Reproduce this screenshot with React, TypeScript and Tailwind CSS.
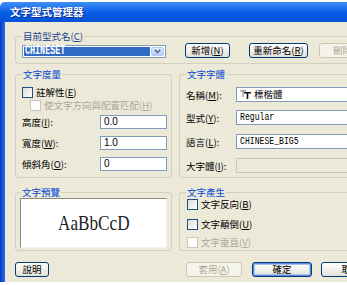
import React from "react";

const U = ({ c }: { c: string }) => <span className="underline underline-offset-[1px]">{c}</span>;

function Btn({
  children,
  className = "",
  disabled = false,
  def = false,
}: {
  children: React.ReactNode;
  className?: string;
  disabled?: boolean;
  def?: boolean;
}) {
  const look = disabled
    ? "border-[#c9c7ba] bg-[#f5f4ea] text-[#aca899]"
    : "border-[#003c74] bg-gradient-to-b from-white to-[#e3e1d6] text-black";
  const ring = def ? "shadow-[inset_0_0_0_1px_#5d8be0,inset_0_0_0_2px_#a7c3f2]" : "";
  return (
    <div
      className={`flex h-[15px] shrink-0 items-center justify-center rounded-[3px] border text-[9.5px] leading-none whitespace-nowrap ${look} ${ring} ${className}`}
    >
      {children}
    </div>
  );
}

function Check({
  children,
  disabled = false,
  className = "",
}: {
  children: React.ReactNode;
  disabled?: boolean;
  className?: string;
}) {
  return (
    <div className={`flex h-[12px] items-center whitespace-nowrap ${className}`}>
      <span
        className={`h-[11px] w-[11px] shrink-0 border ${
          disabled ? "border-[#c9c7ba] bg-white" : "border-[#1c5180] bg-gradient-to-br from-[#dcdcd7] to-white"
        }`}
      />
      <span className={`ml-[3px] text-[9.5px] leading-[12px] ${disabled ? "text-[#aca899]" : "text-black"}`}>
        {children}
      </span>
    </div>
  );
}

function NumRow({ label, value, className = "" }: { label: React.ReactNode; value: string; className?: string }) {
  return (
    <div className={`flex items-center ${className}`}>
      <span className="w-[78px] text-[9.5px] leading-[12px]">{label}</span>
      <div className="flex h-[14px] w-[67px] items-center border border-[#7f9db9] bg-white pl-[3px] font-['Liberation_Sans',sans-serif] text-[10px] leading-none">
        {value}
      </div>
    </div>
  );
}

function Mono({ children }: { children: React.ReactNode }) {
  return (
    <span className="inline-block origin-left scale-x-[0.74] font-['Liberation_Mono',monospace] text-[11px] leading-none text-black">
      {children}
    </span>
  );
}

function FontRow({
  label,
  children,
  className = "",
  disabled = false,
}: {
  label: React.ReactNode;
  children?: React.ReactNode;
  className?: string;
  disabled?: boolean;
}) {
  return (
    <div className={`flex items-center ${className}`}>
      <span className="w-[50px] text-[9.5px] leading-[12px]">{label}</span>
      <div
        className={`flex h-[15px] flex-1 items-center border pl-[3px] ${
          disabled ? "border-[#c9c7ba] bg-[#ece9d8]" : "border-[#7f9db9] bg-white"
        }`}
      >
        {children}
      </div>
    </div>
  );
}

const legend = "px-[1px] text-[9.5px] leading-[11px] text-[#0046d5]";
const group = "rounded-[3px] border border-[#d0d0bf]";

export default function App() {
  return (
    <div className="h-[285px] w-[347px] overflow-hidden bg-white pt-[2px] font-['Noto_Sans_CJK_TC','Noto_Sans',sans-serif] text-black">
      <div className="w-[420px]">
        {/* title bar */}
        <div className="flex h-[20px] items-center rounded-tl-[5px] bg-gradient-to-b from-[#3f8ff6] via-[#0b5ee9] to-[#0652d8] pl-[10px] text-[10.5px] font-bold text-white [text-shadow:1px_1px_#0a2a8f]">
          文字型式管理器
        </div>

        <div className="flex h-[260px]">
          <div className="w-[5px] bg-gradient-to-r from-[#0a37bd] via-[#1656dc] to-[#2d6ae6]" />
          <div className="flex-1 bg-[#ece9d8] pl-[10px]">
            {/* current style */}
            <fieldset className={`mt-[9px] h-[33px] w-[400px] pl-[6px] ${group}`}>
              <legend className="px-[1px] text-[9.5px] leading-[11px] text-[#1d3f94]">
                目前型式名(<U c="C" />)
              </legend>
              <div className="flex items-start">
                <div className="mt-[3px] flex h-[13px] w-[144px] shrink-0 items-center border border-[#7f9db9] bg-white p-[1px]">
                  <div className="flex h-full w-[126px] items-center bg-[#316ac5] pl-[1px]">
                    <span className="inline-block origin-left scale-x-[0.7] font-['Liberation_Mono',monospace] text-[12px] leading-[9px] font-bold text-white">
                      CHINESET
                    </span>
                  </div>
                  <div className="ml-auto flex h-full w-[13px] items-center justify-center rounded-[2px] border border-[#b3c8f5] bg-gradient-to-b from-[#e1eafe] to-[#b6cbf6]">
                    <svg width="7" height="5" viewBox="0 0 7 5">
                      <path d="M0.8 0.8 L3.5 3.6 L6.2 0.8" fill="none" stroke="#4d6185" strokeWidth="1.4" />
                    </svg>
                  </div>
                </div>
                <Btn className="ml-[19px] mt-[1px] w-[45px]">
                  新增(<U c="N" />)
                </Btn>
                <Btn className="ml-[19px] mt-[1px] w-[59px]">
                  重新命名(<U c="R" />)
                </Btn>
                <Btn disabled className="ml-[11px] mt-[1px] w-[60px]">
                  刪除(<U c="D" />)
                </Btn>
              </div>
            </fieldset>

            {/* metrics + font */}
            <div className="mt-[5px] flex gap-[7px]">
              <fieldset className={`h-[109px] w-[157px] shrink-0 pl-[6px] ${group}`}>
                <legend className={legend}>文字度量</legend>
                <Check className="mt-[6px]">
                  註解性(<U c="E" />)
                </Check>
                <Check disabled className="ml-[8px] mt-[1px]">
                  使文字方向與配置匹配(<U c="H" />)
                </Check>
                <NumRow
                  className="mt-[4px]"
                  label={
                    <>
                      高度(<U c="I" />):
                    </>
                  }
                  value="0.0"
                />
                <NumRow
                  className="mt-[7px]"
                  label={
                    <>
                      寬度(<U c="W" />):
                    </>
                  }
                  value="1.0"
                />
                <NumRow
                  className="mt-[7px]"
                  label={
                    <>
                      傾斜角(<U c="O" />):
                    </>
                  }
                  value="0"
                />
              </fieldset>

              <fieldset className={`h-[109px] flex-1 pl-[6px] ${group}`}>
                <legend className={legend}>文字字體</legend>
                <FontRow
                  className="mt-[7px]"
                  label={
                    <>
                      名稱(<U c="M" />):
                    </>
                  }
                >
                  <svg width="11" height="9" viewBox="0 0 11 9" className="mr-[3px] shrink-0">
                    <path d="M0 0h6v1.4H3.7V7H2.3V1.4H0z" fill="#9c9c9c" />
                    <path d="M4 2h7v1.5H8.3V9H6.7V3.5H4z" fill="#111" />
                  </svg>
                  <span className="text-[9.5px] leading-none">標楷體</span>
                </FontRow>
                <FontRow
                  className="mt-[8px]"
                  label={
                    <>
                      型式(<U c="Y" />):
                    </>
                  }
                >
                  <Mono>Regular</Mono>
                </FontRow>
                <FontRow
                  className="mt-[9px]"
                  label={
                    <>
                      語言(<U c="L" />):
                    </>
                  }
                >
                  <Mono>CHINESE_BIG5</Mono>
                </FontRow>
                <FontRow
                  className="mt-[9px]"
                  disabled
                  label={
                    <>
                      大字體(<U c="I" />):
                    </>
                  }
                />
              </fieldset>
            </div>

            {/* preview + effects */}
            <div className="mt-[9px] flex gap-[7px]">
              <fieldset className={`h-[64px] w-[157px] shrink-0 pl-[4px] ${group}`}>
                <legend className={`ml-[1px] ${legend}`}>文字預覽</legend>
                <div className="flex h-[50px] w-[147px] items-center justify-center border border-t-[#8a887e] border-l-[#8a887e] border-b-[#f4f3ee] border-r-[#f4f3ee] bg-white">
                  <span className="inline-block scale-x-[0.78] font-['Liberation_Serif',serif] text-[22px] leading-none text-[#222]">
                    AaBbCcD
                  </span>
                </div>
              </fieldset>

              <fieldset className={`h-[64px] flex-1 pl-[7px] ${group}`}>
                <legend className={`-ml-[1px] ${legend}`}>文字產生</legend>
                <Check>
                  文字反向(<U c="B" />)
                </Check>
                <Check className="mt-[8px]">
                  文字顛倒(<U c="U" />)
                </Check>
                <Check disabled className="mt-[6px]">
                  文字垂直(<U c="V" />)
                </Check>
              </fieldset>
            </div>

            {/* bottom buttons */}
            <div className="mt-[11px] flex">
              <Btn className="w-[34px]">說明</Btn>
              <Btn disabled className="ml-[137px] w-[56px]">
                套用(<U c="A" />)
              </Btn>
              <Btn def className="ml-[10px] w-[60px]">
                確定
              </Btn>
              <Btn className="ml-[9px] w-[60px]">取消</Btn>
            </div>
          </div>
        </div>
      </div>
    </div>
  );
}
